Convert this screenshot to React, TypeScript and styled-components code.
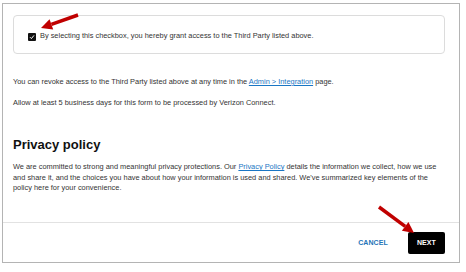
import styled, { createGlobalStyle } from "styled-components";

const GlobalStyle = createGlobalStyle`
  body {
    margin: 0;
    background: #fff;
    font-family: "Liberation Sans", Arial, sans-serif;
  }
`;

const Page = styled.div`
  position: relative;
  width: 466px;
  height: 272px;
  padding: 3px 0 0 2px;
  box-sizing: border-box;
`;

const Frame = styled.div`
  width: 458px;
  height: 260px;
  box-sizing: border-box;
  border: 1px solid #b4b4b4;
  display: flex;
  flex-direction: column;
`;

const Body = styled.div`
  flex: 1;
  padding: 11px 14px 0 10px;
  color: #333;
`;

const ConsentCard = styled.div`
  height: 39px;
  box-sizing: border-box;
  border: 1px solid #dcdcdc;
  border-radius: 4px;
  display: flex;
  align-items: center;
  padding: 4px 0 0 14px;
  gap: 4px;
`;

const Check = styled.span`
  width: 8px;
  height: 8px;
  flex: none;
  background: #111;
  border-radius: 1px;
  display: flex;
  align-items: center;
  justify-content: center;
`;

const Small = styled.p<{ $top?: number }>`
  margin: ${(p) => p.$top ?? 0}px 0 0;
  font-size: 7.4px;
  line-height: 10.6px;
  color: #333;
`;

const Link = styled.a`
  color: #1a76c4;
  text-decoration: underline;
`;

const Heading = styled.h2`
  margin: 29px 0 0;
  font-size: 13px;
  line-height: 16px;
  font-weight: bold;
  color: #111;
`;

const Footer = styled.div`
  height: 39px;
  border-top: 1px solid #e2e2e2;
  display: flex;
  align-items: center;
  justify-content: flex-end;
  padding: 0 14px 0 0;
  gap: 20px;
`;

const Button = styled.button<{ $primary?: boolean }>`
  font-family: inherit;
  font-size: 7px;
  font-weight: bold;
  letter-spacing: 0.1px;
  border: none;
  border-radius: 2px;
  height: 22px;
  padding: 0 ${(p) => (p.$primary ? "9px" : "0")};
  background: ${(p) => (p.$primary ? "#000" : "transparent")};
  color: ${(p) => (p.$primary ? "#fff" : "#2474b8")};
`;

const ArrowSvg = styled.svg`
  position: absolute;
  left: 0;
  top: 0;
  overflow: visible;
  pointer-events: none;
`;

const Arrow = ({ x1, y1, x2, y2 }: { x1: number; y1: number; x2: number; y2: number }) => {
  const dx = x2 - x1;
  const dy = y2 - y1;
  const len = Math.hypot(dx, dy);
  const ux = dx / len;
  const uy = dy / len;
  const head = 11;
  const bx = x2 - ux * head;
  const by = y2 - uy * head;
  const px = -uy * 5.5;
  const py = ux * 5.5;
  return (
    <ArrowSvg width="466" height="272">
      <line x1={x1} y1={y1} x2={bx} y2={by} stroke="#c00000" strokeWidth="3.5" />
      <polygon points={`${x2},${y2} ${bx + px},${by + py} ${bx - px},${by - py}`} fill="#c00000" />
    </ArrowSvg>
  );
};

export default function App() {
  return (
    <>
      <GlobalStyle />
      <Page>
        <Frame>
          <Body>
            <ConsentCard>
              <Check>
                <svg width="6" height="6" viewBox="0 0 6 6">
                  <path d="M1 3.2 L2.4 4.6 L5 1.4" stroke="#fff" strokeWidth="1" fill="none" />
                </svg>
              </Check>
              <Small>By selecting this checkbox, you hereby grant access to the Third Party listed above.</Small>
            </ConsentCard>
            <Small $top={23}>
              You can revoke access to the Third Party listed above at any time in the{" "}
              <Link>Admin &gt; Integration</Link> page.
            </Small>
            <Small $top={10}>Allow at least 5 business days for this form to be processed by Verizon Connect.</Small>
            <Heading>Privacy policy</Heading>
            <Small $top={9}>
              We are committed to strong and meaningful privacy protections. Our <Link>Privacy Policy</Link> details
              the information we collect, how we use and share it, and the choices you have about how your
              information is used and shared. We've summarized key elements of the policy here for your convenience.
            </Small>
          </Body>
          <Footer>
            <Button>CANCEL</Button>
            <Button $primary>NEXT</Button>
          </Footer>
        </Frame>
        <Arrow x1={78} y1={15} x2={41} y2={28} />
        <Arrow x1={379} y1={207} x2={414} y2={233} />
      </Page>
    </>
  );
}
